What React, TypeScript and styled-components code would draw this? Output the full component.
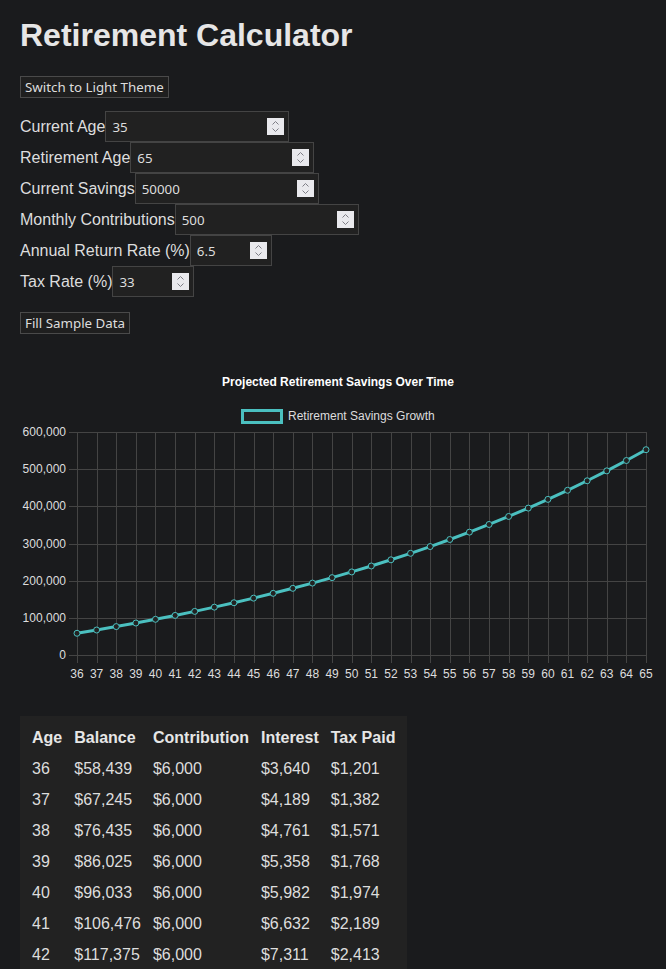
import React, {useMemo, useState} from 'react';
import styled, {createGlobalStyle} from 'styled-components';

const GlobalStyle = createGlobalStyle`
  html, body {
    margin: 0;
    background: #1a1b1d;
    color: #dddddd;
    font-family: "Liberation Sans", Arial, sans-serif;
  }
`;

const TEAL = 'rgb(75, 192, 192)';
const GRID = '#444444';

interface IRow {
  age: number;
  balance: number;
  contribution: number;
  interest: number;
  tax: number;
}

const money = (n: number) => '$' + Math.round(n).toLocaleString('en-US');

const project = (
  age: number,
  retire: number,
  savings: number,
  monthly: number,
  rate: number,
  taxRate: number,
): IRow[] => {
  const rows: IRow[] = [];
  let balance = savings;
  for (let a = age + 1; a <= retire; a++) {
    const contribution = monthly * 12;
    const interest = (balance + contribution) * (rate / 100);
    const tax = interest * (taxRate / 100);
    balance = balance + contribution + interest - tax;
    rows.push({age: a, balance, contribution, interest, tax});
  }
  return rows;
};

// chart geometry, in px inside the svg
const W = 636;
const H = 318;
const LEFT = 57;
const RIGHT = 626;
const TOP = 67;
const BOTTOM = 290;
const Y_MAX = 600000;

const Chart = ({rows}: {rows: IRow[]}) => {
  const step = (RIGHT - LEFT) / Math.max(rows.length - 1, 1);
  const xs = rows.map((_, i) => LEFT + i * step);
  const yOf = (v: number) => BOTTOM - (v / Y_MAX) * (BOTTOM - TOP);
  const yTicks = [0, 100000, 200000, 300000, 400000, 500000, 600000];
  const line = rows.map((r, i) => `${i ? 'L' : 'M'}${xs[i]},${yOf(r.balance)}`).join(' ');

  return (
    <ChartBox>
      <svg width={W} height={H} viewBox={`0 0 ${W} ${H}`}>
        <text x={W / 2} y={21} textAnchor="middle" fontSize="12" fontWeight="bold" fill="#ffffff">
          Projected Retirement Savings Over Time
        </text>
        <rect x={222.5} y={45.5} width={39} height={12} fill="#222222" stroke={TEAL} strokeWidth={3} />
        <text x={268} y={55} fontSize="12" fill="#dddddd">
          Retirement Savings Growth
        </text>

        {yTicks.map((t) => (
          <g key={t}>
            <line x1={LEFT - 8} x2={RIGHT} y1={Math.round(yOf(t)) + 0.5} y2={Math.round(yOf(t)) + 0.5} stroke={GRID} />
            <text x={LEFT - 11} y={yOf(t) + 4} textAnchor="end" fontSize="12" fill="#dddddd">
              {t.toLocaleString('en-US')}
            </text>
          </g>
        ))}
        {rows.map((r, i) => (
          <g key={r.age}>
            <line x1={Math.round(xs[i]) + 0.5} x2={Math.round(xs[i]) + 0.5} y1={TOP} y2={BOTTOM + 8} stroke={GRID} />
            <text x={xs[i]} y={BOTTOM + 23} textAnchor="middle" fontSize="12" fill="#dddddd">
              {r.age}
            </text>
          </g>
        ))}

        <path d={line} fill="none" stroke={TEAL} strokeWidth={3} strokeLinejoin="round" />
        {rows.map((r, i) => (
          <circle key={r.age} cx={xs[i]} cy={yOf(r.balance)} r={3} fill="#222222" stroke={TEAL} strokeWidth={1} />
        ))}
      </svg>
    </ChartBox>
  );
};

const SpinIcon = () => (
  <Spinner>
    <svg width="17" height="17" viewBox="0 0 17 17">
      <path d="M5.5 6.5 L8.5 3.5 L11.5 6.5" fill="none" stroke="#7d7d85" strokeWidth="1" />
      <path d="M5.5 10.5 L8.5 13.5 L11.5 10.5" fill="none" stroke="#7d7d85" strokeWidth="1" />
    </svg>
  </Spinner>
);

const App = () => {
  const [age, setAge] = useState('35');
  const [retire, setRetire] = useState('65');
  const [savings, setSavings] = useState('50000');
  const [monthly, setMonthly] = useState('500');
  const [rate, setRate] = useState('6.5');
  const [tax, setTax] = useState('33');

  const rows = useMemo(
    () => project(+age, +retire, +savings, +monthly, +rate, +tax),
    [age, retire, savings, monthly, rate, tax],
  );

  const fields = [
    {label: 'Current Age', value: age, set: setAge, width: 184},
    {label: 'Retirement Age', value: retire, set: setRetire, width: 184},
    {label: 'Current Savings', value: savings, set: setSavings, width: 184},
    {label: 'Monthly Contributions', value: monthly, set: setMonthly, width: 184},
    {label: 'Annual Return Rate (%)', value: rate, set: setRate, width: 82},
    {label: 'Tax Rate (%)', value: tax, set: setTax, width: 82},
  ];

  const fillSample = () => {
    setAge('35');
    setRetire('65');
    setSavings('50000');
    setMonthly('500');
    setRate('6.5');
    setTax('33');
  };

  return (
    <Page>
      <GlobalStyle />
      <Title>Retirement Calculator</Title>
      <Button>Switch to Light Theme</Button>
      <Form>
        {fields.map((f) => (
          <Row key={f.label}>
            <span>{f.label}</span>
            <Field>
              <NumberInput
                type="number"
                $width={f.width}
                value={f.value}
                onChange={(e) => f.set(e.target.value)}
              />
              <SpinIcon />
            </Field>
          </Row>
        ))}
      </Form>
      <Button $top={15} onClick={fillSample}>
        Fill Sample Data
      </Button>

      <Chart rows={rows} />

      <Table>
        <thead>
          <tr>
            <th>Age</th>
            <th>Balance</th>
            <th>Contribution</th>
            <th>Interest</th>
            <th>Tax Paid</th>
          </tr>
        </thead>
        <tbody>
          {rows.map((r) => (
            <tr key={r.age}>
              <td>{r.age}</td>
              <td>{money(r.balance)}</td>
              <td>{money(r.contribution)}</td>
              <td>{money(r.interest)}</td>
              <td>{money(r.tax)}</td>
            </tr>
          ))}
        </tbody>
      </Table>
    </Page>
  );
};

const Page = styled.main`
  padding: 17px 20px 20px;
`;

const Title = styled.h1`
  margin: 0 0 22px;
  font-size: 32px;
  line-height: 37px;
  font-weight: bold;
  color: #e6e6e6;
`;

const Button = styled.button<{$top?: number}>`
  display: block;
  margin-top: ${(p) => p.$top ?? 0}px;
  padding: 1px 4px;
  height: 22px;
  font-family: "Noto Sans", sans-serif;
  font-size: 13.33px;
  color: #dddddd;
  background: #1f1f1f;
  border: 1px solid #4a4a4a;
  border-radius: 0;
`;

const Form = styled.div`
  margin-top: 13px;
  display: flex;
  flex-direction: column;
`;

const Row = styled.label`
  display: flex;
  align-items: center;
  height: 31px;
  font-size: 16px;
  color: #dddddd;
`;

const Field = styled.span`
  position: relative;
  display: block;
  height: 31px;
`;

const NumberInput = styled.input<{$width: number}>`
  box-sizing: border-box;
  display: block;
  width: ${(p) => p.$width}px;
  height: 31px;
  padding: 0 26px 0 6px;
  font-family: "Noto Sans", sans-serif;
  font-size: 13.33px;
  color: #dddddd;
  background: #212121;
  border: 1px solid #444444;
  border-radius: 0;
  outline: none;
  -moz-appearance: textfield;
  &::-webkit-inner-spin-button,
  &::-webkit-outer-spin-button {
    -webkit-appearance: none;
    margin: 0;
  }
`;

const Spinner = styled.span`
  position: absolute;
  right: 5px;
  top: 7px;
  width: 17px;
  height: 17px;
  background: #e9e9ed;
  pointer-events: none;
  svg {
    display: block;
  }
`;

const ChartBox = styled.div`
  margin-top: 31px;
  height: ${H}px;
  font-family: "Liberation Sans", Arial, sans-serif;
  svg {
    display: block;
  }
`;

const Table = styled.table`
  margin-top: 33px;
  background: #222222;
  border-collapse: separate;
  border-spacing: 0;
  padding: 6px;
  font-size: 16px;
  color: #dddddd;
  th,
  td {
    padding: 6px;
    line-height: 19px;
    text-align: left;
    white-space: nowrap;
  }
  th {
    font-weight: bold;
    color: #e6e6e6;
  }
`;

export default App;
